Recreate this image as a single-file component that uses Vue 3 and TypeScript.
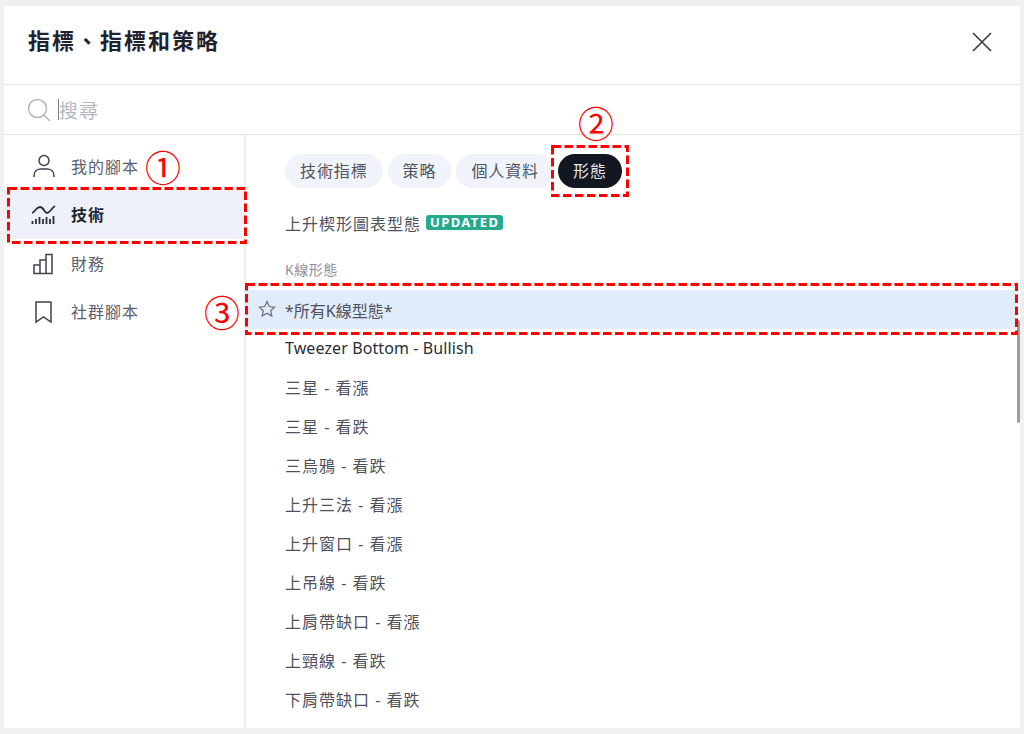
<script setup lang="ts">
const navItems = [
  { label: '我的腳本', icon: 'user' },
  { label: '技術', icon: 'tech', active: true },
  { label: '財務', icon: 'bars' },
  { label: '社群腳本', icon: 'mark' },
]
const tabs = ['技術指標', '策略', '個人資料', '形態']
const rows = [
  '三星 - 看漲', '三星 - 看跌', '三烏鴉 - 看跌', '上升三法 - 看漲', '上升窗口 - 看漲',
  '上吊線 - 看跌', '上肩帶缺口 - 看漲', '上頸線 - 看跌', '下肩帶缺口 - 看跌',
]
</script>

<template>
  <div class="page">
    <div class="dialog">
      <header class="head">
        <h1>指標、指標和策略</h1>
        <svg class="close" width="22" height="22" viewBox="0 0 22 22"><path d="M2 2l18 18M20 2L2 20" stroke="#3a3e4a" stroke-width="1.7" fill="none"/></svg>
      </header>
      <div class="search">
        <svg width="24" height="24" viewBox="0 0 24 24" fill="none" stroke="#b4b7c0" stroke-width="1.5"><circle cx="10.500" cy="10.500" r="9"/><path d="M17 17l6 6"/></svg>
        <span class="caret"></span>
        <span class="ph">搜尋</span>
      </div>
      <div class="body">
        <nav class="side">
          <div v-for="n in navItems" :key="n.label" class="nav" :class="{ active: n.active }">
            <svg width="28" height="28" viewBox="0 0 28 28" fill="none" stroke="#3f4350" stroke-width="1.5">
              <template v-if="n.icon === 'user'"><circle cx="14" cy="8.500" r="5"/><path d="M4 25v-1.500c0-4.500 3.500-6.500 7-6.500h6c3.500 0 7 2 7 6.500V25"/></template>
              <template v-else-if="n.icon === 'tech'"><path d="M2 13c3-1 4-6 8-6s4 6 7 6 4-4.500 8-7" stroke="#2a2e39" stroke-width="1.800"/><path d="M2.500 24v-3M6 24v-5M9.500 24v-7M13 24v-5M16.500 24v-7M20 24v-5M23.500 24v-8" stroke="#2a2e39" stroke-width="1.800"/></template>
              <template v-else-if="n.icon === 'bars'"><path d="M4 24.500V16h6v8.500zM10 24.500V11h6v13.500zM16 24.500V5.500h6v19zM4 24.500h18"/></template>
              <template v-else><path d="M6 5h15v20l-7.500-5L6 25z"/></template>
            </svg>
            <span>{{ n.label }}</span>
          </div>
        </nav>
        <main class="main">
          <div class="tabs">
            <span v-for="t in tabs" :key="t" class="tab" :class="{ on: t === '形態' }">{{ t }}</span>
          </div>
          <div class="row first">上升楔形圖表型態<em class="badge">UPDATED</em></div>
          <div class="sect">K線形態</div>
          <div class="row hl">
            <svg class="star" width="18" height="18" viewBox="0 0 18 18" fill="none" stroke="#6a6e7a" stroke-width="1.2"><path d="M9 1.500l2.300 5 5.300.6-3.900 3.600 1.100 5.300L9 13.300 4.200 16l1.100-5.300L1.400 7.100l5.300-.6z"/></svg>
            *所有K線型態*
          </div>
          <div class="row dark">Tweezer Bottom - Bullish</div>
          <div v-for="r in rows" :key="r" class="row">{{ r }}</div>
          <div class="thumb"></div>
        </main>
      </div>
    </div>
    <svg class="mark m1" width="240" height="57"><rect x="1.500" y="1.500" width="237" height="54" /></svg>
    <svg class="mark m2" width="78" height="52"><rect x="1.500" y="1.500" width="75" height="49" /></svg>
    <svg class="mark m3" width="773" height="52"><rect x="1.500" y="1.500" width="770" height="49" /></svg>
    <span class="num n1">①</span>
    <span class="num n2">②</span>
    <span class="num n3">③</span>
  </div>
</template>

<style scoped>
.page {
  position: relative;
  width: 1024px;
  height: 734px;
  box-sizing: border-box;
  padding: 6px 4px;
  background: #f0f0f0;
  font-family: "Noto Sans", "Noto Sans CJK TC", sans-serif;
  overflow: hidden;
}
.dialog {
  height: 722px;
  background: #fff;
  display: flex;
  flex-direction: column;
}
.head {
  height: 79px;
  flex: none;
  box-sizing: border-box;
  border-bottom: 1px solid #e3e5ee;
  display: flex;
  align-items: center;
  justify-content: space-between;
  padding: 0 27px 12px 24px;
}
.close { margin-top: 6px; }
h1 {
  margin: 0;
  font-size: 22px;
  font-weight: 700;
  letter-spacing: 2px;
  color: #1f2330;
}
.search {
  height: 50px;
  flex: none;
  box-sizing: border-box;
  border-bottom: 1px solid #e3e5ee;
  display: flex;
  align-items: center;
  padding-left: 23px;
}
.caret { width: 1px; height: 21px; background: #7b7f8b; margin-left: 7px; }
.ph { font-size: 19px; letter-spacing: 1px; color: #b4b7c0; }
.body { flex: 1; display: flex; min-height: 0; }
.side {
  width: 242px;
  flex: none;
  box-sizing: border-box;
  border-right: 2px solid #eff0f5;
  padding-top: 6.500px;
}
.nav {
  height: 48.500px;
  display: flex;
  align-items: center;
  gap: 13px;
  padding-left: 26px;
  font-size: 16px;
  letter-spacing: 1px;
  color: #5d606c;
}
.nav.active { background: #eef1f9; color: #1f2330; font-weight: 700; }
.main { flex: 1; position: relative; overflow: hidden; }
.tabs { display: flex; gap: 5px; padding: 19px 0 0 39px; height: 34px; }
.tab {
  height: 34px;
  line-height: 34px;
  padding: 0 15px;
  border-radius: 17px;
  background: #f0f3fa;
  font-size: 16px;
  letter-spacing: .9px;
  color: #50535f;
}
.tab.on { background: #131722; color: #e6e7ea; margin-left: -1px; }
.row {
  height: 39px;
  display: flex;
  align-items: center;
  padding-left: 39px;
  font-size: 16px;
  letter-spacing: 1px;
  color: #4e515d;
  position: relative;
}
.row.first { margin-top: 15px; }
.badge {
  font-style: normal;
  font-size: 13px;
  font-weight: 700;
  line-height: 15px;
  letter-spacing: 1.400px;
  color: #fff;
  background: #27a98b;
  border-radius: 3px;
  padding: 0 4px;
  margin-left: 5px;
}
.sect { margin: 16px 0 8px; height: 24px; padding-left: 39px; font-size: 14px; line-height: 24px; letter-spacing: .6px; color: #8d909b; }
.row.hl { margin-right: 5px; background: #e1ecfa; letter-spacing: 0; }
.star { position: absolute; left: 12px; top: 10px; }
.row.dark { height: 38px; color: #2a2e39; letter-spacing: .1px; }
.thumb { position: absolute; right: 0; top: 185px; width: 3px; height: 103px; background: #9b9ea8; border-radius: 2px; }
.mark { position: absolute; fill: none; stroke: #f00; stroke-width: 3; stroke-dasharray: 8.500 3.500; }
.m1 { left: 7px; top: 187px; }
.m2 { left: 551px; top: 145px; }
.m3 { left: 245px; top: 283px; }
.num { position: absolute; font-size: 36px; line-height: 36px; color: #f00; font-weight: 400; font-family: "Noto Sans CJK TC", sans-serif; }
.n1 { left: 145px; top: 148px; }
.n2 { left: 578px; top: 104px; }
.n3 { left: 204px; top: 293px; }
</style>
